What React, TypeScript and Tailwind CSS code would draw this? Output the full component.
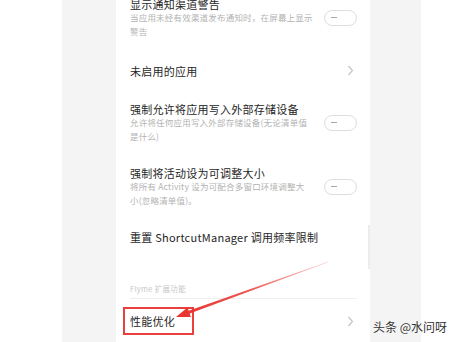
import React from "react";

const cjk = "font-['Noto_Sans_CJK_SC','Noto_Sans',sans-serif]";

function Toggle() {
  return (
    <div className="flex h-[16px] w-[33px] shrink-0 items-center rounded-full border border-[#dedede] bg-white">
      <span className="ml-[6px] h-[1.5px] w-[6px] bg-[#a8a8a8]" />
    </div>
  );
}

function Chevron() {
  return (
    <svg width="7" height="11" viewBox="0 0 7 11" className="mr-[3px] shrink-0">
      <path d="M1.5 1 L5.5 5.5 L1.5 10" fill="none" stroke="#c4c4c4" strokeWidth="1.2" />
    </svg>
  );
}

function SwitchRow({ title, lines, h }: { title: string; lines: string[]; h: string }) {
  return (
    <div className={`flex items-center ${h}`}>
      <div className="flex-1">
        <div className="text-[11px] leading-[14px] tracking-[0.25px] text-[#262626]">{title}</div>
        <div className="text-[8.5px] leading-[13.5px] tracking-[0.2px] text-[#b3b3b3]">
          {lines.map((l, i) => (
            <div key={i}>{l}</div>
          ))}
        </div>
      </div>
      <Toggle />
    </div>
  );
}

function LinkRow({ title, h, chevron }: { title: string; h: string; chevron?: boolean }) {
  return (
    <div className={`flex items-center justify-between ${h}`}>
      <span className="text-[11px] leading-[14px] tracking-[0.25px] text-[#262626]">{title}</span>
      {chevron && <Chevron />}
    </div>
  );
}

export default function App() {
  return (
    <div className={`relative flex h-[342px] w-[455px] overflow-hidden bg-white ${cjk}`}>
      <div className="w-[62px] bg-white" />
      <div className="w-[54px] bg-[#f4f4f4]" />

      {/* settings panel */}
      <div className="relative w-[254px] bg-white pl-[14px] pr-[13px]">
        <div className="-mt-[16px]">
          <SwitchRow
            h="h-[67px]"
            title="显示通知渠道警告"
            lines={["当应用未经有效渠道发布通知时，在屏幕上显示", "警告"]}
          />
          <LinkRow h="h-[39px]" title="未启用的应用" chevron />
          <SwitchRow
            h="h-[65px]"
            title="强制允许将应用写入外部存储设备"
            lines={["允许将任何应用写入外部存储设备(无论清单值", "是什么)"]}
          />
          <SwitchRow
            h="h-[63px]"
            title="强制将活动设为可调整大小"
            lines={["将所有 Activity 设为可配合多窗口环境调整大", "小(忽略清单值)。"]}
          />
          <LinkRow h="h-[38px]" title="重置 ShortcutManager 调用频率限制" />
          <div className="flex h-[43px] items-end border-b border-[#efefef] pb-[3px]">
            <span className="text-[7.5px] leading-[12px] tracking-[0.3px] text-[#c6c6c6]">Flyme 扩展功能</span>
          </div>
          <LinkRow h="h-[44px]" title="性能优化" chevron />
        </div>
        {/* scroll indicator */}
        <div className="absolute right-0 top-[225px] h-[44px] w-[2px] bg-[#ececec]" />
      </div>

      <div className="w-[51px] bg-[#f4f4f4]" />
      <div className="flex-1 bg-white" />

      {/* annotation box */}
      <div className="absolute left-[123px] top-[307px] h-[28px] w-[71px] border-2 border-[#e8403d]" />

      {/* annotation arrow */}
      <svg className="pointer-events-none absolute left-0 top-0" width="455" height="342" viewBox="0 0 455 342">
        <defs>
          <linearGradient id="arrowFade" x1="328" y1="262" x2="176" y2="317" gradientUnits="userSpaceOnUse">
            <stop offset="0" stopColor="#f06a66" stopOpacity="0.35" />
            <stop offset="0.5" stopColor="#ea3b37" stopOpacity="0.85" />
            <stop offset="1" stopColor="#e8302c" />
          </linearGradient>
        </defs>
        <polygon
          points="327.9,261.7 188.7,310.8 187.5,307.5 176,317 190.9,316.9 189.7,313.6 328.1,262.3"
          fill="url(#arrowFade)"
        />
      </svg>

      {/* watermark */}
      <div className="absolute left-[373px] top-[320px] text-[12px] leading-[14px] text-[#333] [text-shadow:0_0_2px_#fff]">
        头条 @水问呀
      </div>
    </div>
  );
}
